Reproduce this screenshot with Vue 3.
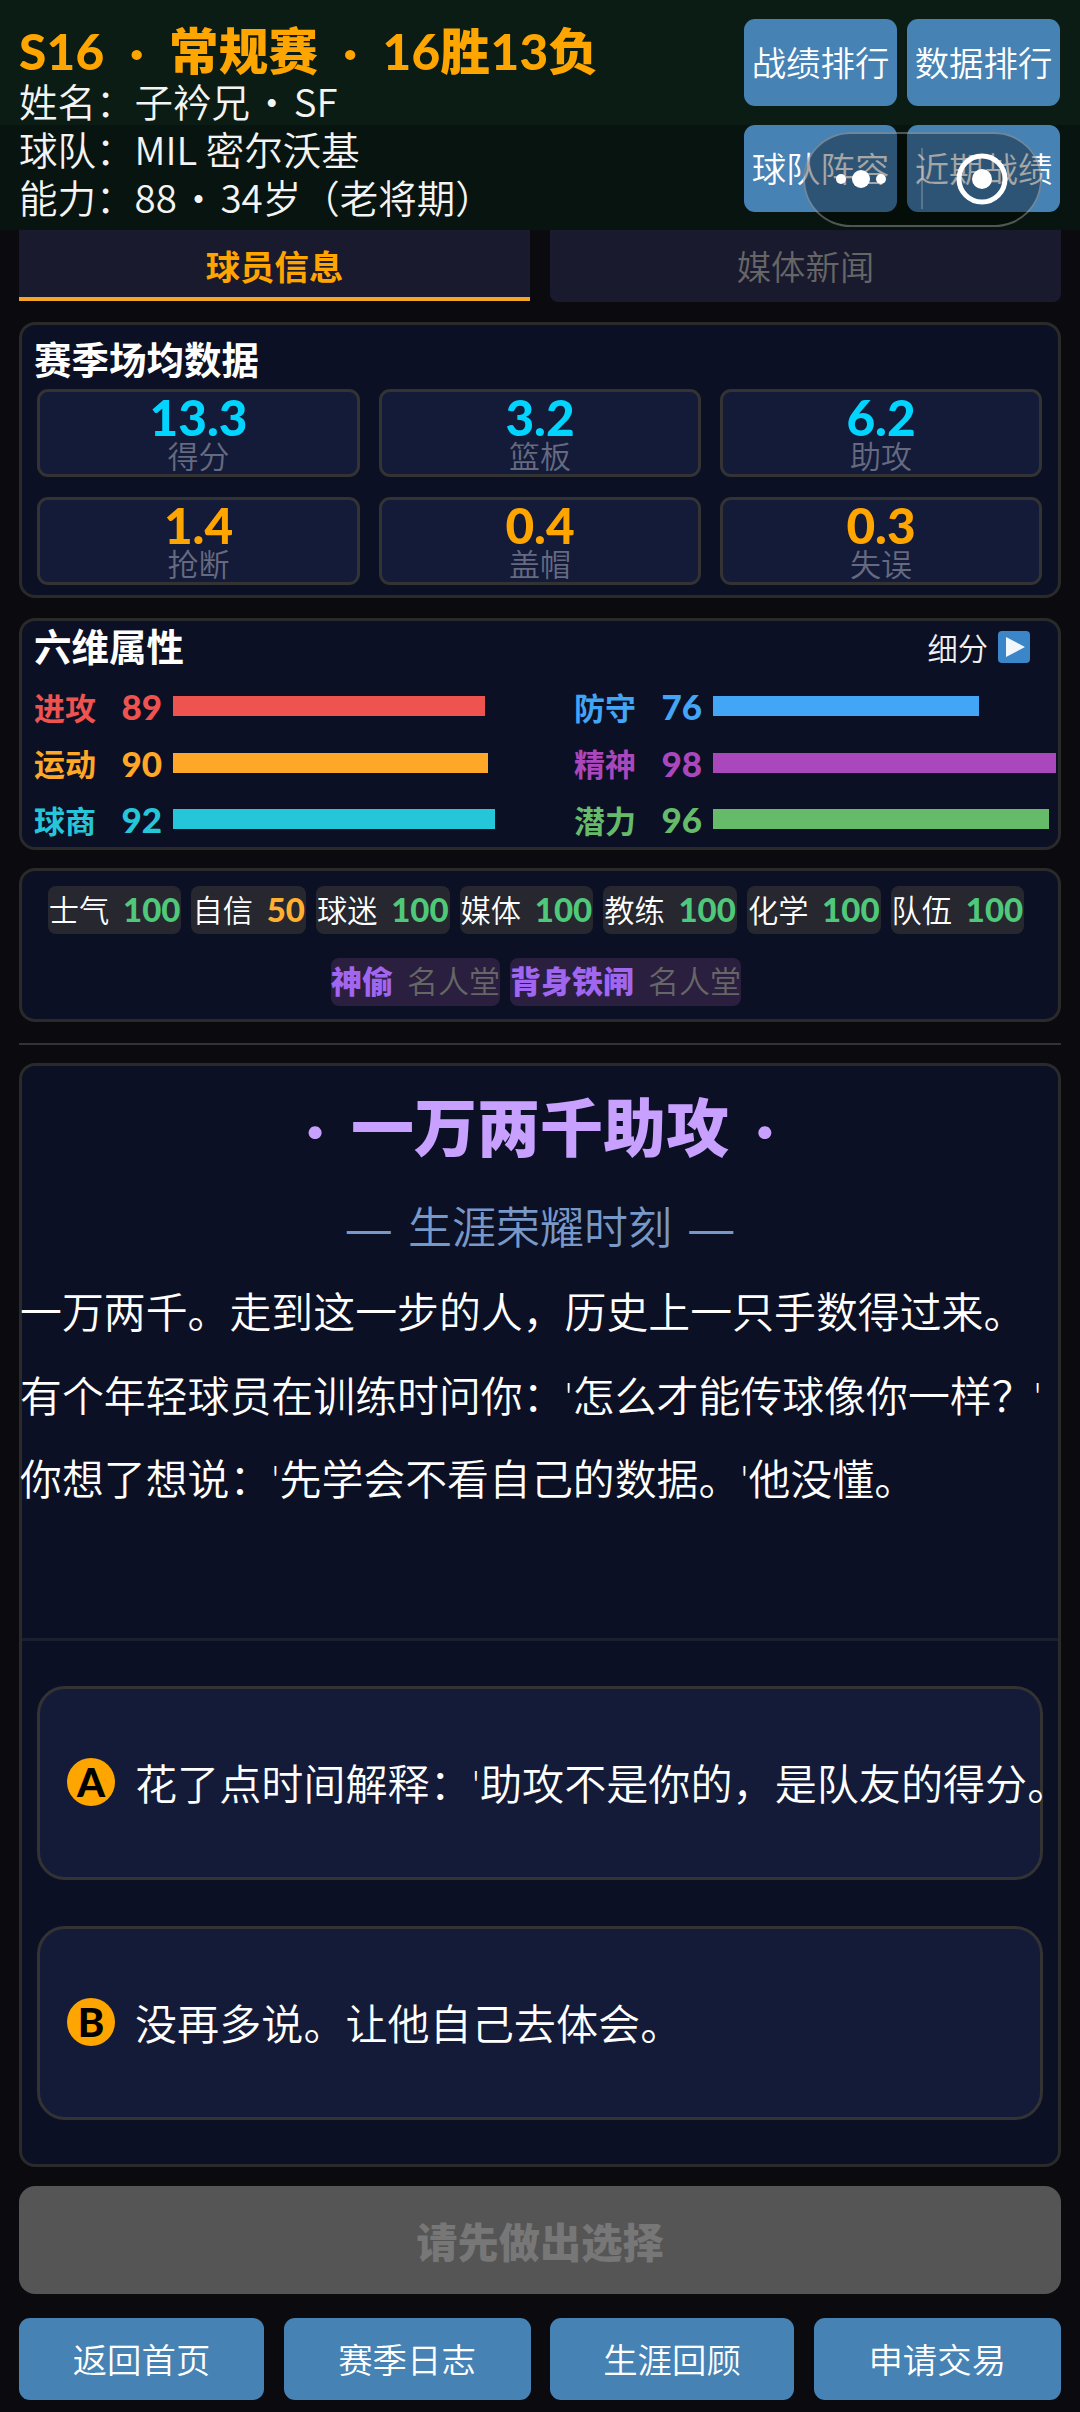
<template>
  <div class="page">
    <header class="top">
      <div class="info">
        <div class="season">S16 · 常规赛 · 16胜13负</div>
        <div class="line line-dot">姓名：子衿兄 · SF</div>
        <div class="line">球队：MIL 密尔沃基</div>
        <div class="line line-dot">能力：88 · 34岁（老将期）</div>
      </div>
      <div class="top-btns">
        <button class="btn" v-for="b in topButtons" :key="b">{{ b }}</button>
      </div>
      <div class="capsule">
        <svg width="239" height="95" viewBox="0 0 239 95">
          <circle cx="38" cy="47" r="5" fill="#fff" />
          <circle cx="58" cy="47" r="9" fill="#fff" />
          <circle cx="78" cy="47" r="5" fill="#fff" />
          <path d="M119 16V77" stroke="rgba(255,255,255,0.2)" stroke-width="2" />
          <circle cx="179" cy="47" r="23" fill="none" stroke="#fff" stroke-width="5" />
          <circle cx="179" cy="47" r="10" fill="#fff" />
        </svg>
      </div>
    </header>

    <main class="content">
      <div class="tabs">
        <div class="tab tab-on">球员信息</div>
        <div class="tab">媒体新闻</div>
      </div>

      <section class="card stats-card">
        <h2>赛季场均数据</h2>
        <div class="stats">
          <div class="stat" v-for="s in stats" :key="s.label">
            <div class="stat-num" :class="s.hot ? 'num-orange' : 'num-blue'">{{ s.value }}</div>
            <div class="stat-label">{{ s.label }}</div>
          </div>
        </div>
      </section>

      <section class="card attrs-card">
        <div class="attrs-head">
          <h2>六维属性</h2>
          <div class="detail">细分 <span class="play"><i></i></span></div>
        </div>
        <div class="attrs">
          <div class="attr" v-for="a in attrs" :key="a.name" :style="{ color: a.color }">
            <span class="attr-name">{{ a.name }}</span>
            <span class="attr-val">{{ a.value }}</span>
            <div class="track">
              <div class="fill" :style="{ width: a.value + '%', background: a.color }"></div>
            </div>
          </div>
        </div>
      </section>

      <section class="card chips-card">
        <div class="chips">
          <span class="chip" v-for="c in chips" :key="c.name">{{ c.name }} <b :class="{ low: c.value < 100 }">{{ c.value }}</b></span>
        </div>
        <div class="chips">
          <span class="chip chip-hall" v-for="h in halls" :key="h"><b>{{ h }}</b> <em>名人堂</em></span>
        </div>
      </section>

      <hr class="rule" />

      <section class="card story">
        <div class="story-text">
          <h1>· 一万两千助攻 ·</h1>
          <div class="subtitle">— 生涯荣耀时刻 —</div>
          <p>一万两千。走到这一步的人，历史上一只手数得过来。</p>
          <p>有个年轻球员在训练时问你：'怎么才能传球像你一样？'</p>
          <p>你想了想说：'先学会不看自己的数据。'他没懂。</p>
        </div>
        <div class="options">
          <div class="option" v-for="o in options" :key="o.key">
            <span class="badge">{{ o.key }}</span>
            <span class="option-text">{{ o.text }}</span>
          </div>
        </div>
      </section>

      <button class="next">请先做出选择</button>

      <nav class="bottom">
        <button class="btn" v-for="b in bottomButtons" :key="b">{{ b }}</button>
      </nav>
    </main>
  </div>
</template>

<script setup>
const topButtons = ['战绩排行', '数据排行', '球队阵容', '近期战绩']
const bottomButtons = ['返回首页', '赛季日志', '生涯回顾', '申请交易']

const stats = [
  { value: '13.3', label: '得分' },
  { value: '3.2', label: '篮板' },
  { value: '6.2', label: '助攻' },
  { value: '1.4', label: '抢断', hot: true },
  { value: '0.4', label: '盖帽', hot: true },
  { value: '0.3', label: '失误', hot: true }
]

const attrs = [
  { name: '进攻', value: 89, color: '#ef5350' },
  { name: '防守', value: 76, color: '#42a5f5' },
  { name: '运动', value: 90, color: '#ffa726' },
  { name: '精神', value: 98, color: '#ab47bc' },
  { name: '球商', value: 92, color: '#26c6da' },
  { name: '潜力', value: 96, color: '#66bb6a' }
]

const chips = [
  { name: '士气', value: 100 },
  { name: '自信', value: 50 },
  { name: '球迷', value: 100 },
  { name: '媒体', value: 100 },
  { name: '教练', value: 100 },
  { name: '化学', value: 100 },
  { name: '队伍', value: 100 }
]

const halls = ['神偷', '背身铁闸']

const options = [
  { key: 'A', text: "花了点时间解释：'助攻不是你的，是队友的得分。" },
  { key: 'B', text: '没再多说。让他自己去体会。' }
]
</script>

<style>
html,
body {
  margin: 0;
  background: #0a0a0f;
}
</style>

<style scoped>
.page {
  width: 1080px;
  height: 2412px;
  overflow: hidden;
  background: #0a0a0f;
  color: #fff;
  font-family: Lato, "Noto Sans CJK SC", sans-serif;
}

h1,
h2,
p {
  margin: 0;
}

button {
  border: none;
  font-family: inherit;
  padding: 0;
}

.top {
  position: relative;
  height: 230px;
  box-sizing: border-box;
  padding: 19px 20px 19px 19px;
  display: flex;
  justify-content: space-between;
  background: linear-gradient(#0a1c14 125px, #08140f 125px);
}

.info {
  padding-top: 8px;
}

.season {
  font-size: 49.5px;
  line-height: 48.5px;
  font-weight: 900;
  letter-spacing: 0.3px;
  word-spacing: 13px;
  color: #ffa500;
}

.line {
  font-family: "Noto Sans CJK SC", sans-serif;
  font-size: 38.5px;
  line-height: 48px;
  font-weight: 350;
  color: #f4f4f4;
}

.line-dot {
  word-spacing: -6px;
}

.top-btns {
  display: grid;
  grid-template-columns: 153px 153px;
  grid-auto-rows: 87px;
  gap: 19px 10px;
}

.btn {
  background: #4682b4;
  color: #fff;
  font-size: 34.4px;
  font-weight: 350;
  padding-bottom: 3px;
  border-radius: 11px;
}

.capsule {
  position: absolute;
  left: 803px;
  top: 132px;
  width: 239px;
  height: 95px;
  border-radius: 48px;
  box-shadow: inset 0 0 0 2px rgba(255, 255, 255, 0.3);
  background: rgba(0, 0, 0, 0.35);
}

.capsule svg {
  display: block;
}

.content {
  padding: 0 19px;
}

.tabs {
  display: grid;
  grid-template-columns: 511px 511px;
  gap: 20px;
}

.tab {
  height: 72px;
  box-sizing: border-box;
  background: #1a1a2e;
  border-radius: 0 0 8px 8px;
  color: #666;
  font-size: 34.4px;
  font-weight: 350;
  line-height: 73px;
  text-align: center;
}

.tab-on {
  color: #ffa500;
  font-weight: 700;
  border-radius: 0;
  border-bottom: 4px solid #f5a623;
  height: 71px;
}

.card {
  box-sizing: border-box;
  background: #0c1024;
  border: 3px solid #2a2a2a;
  border-radius: 16px;
}

.card h2 {
  font-size: 37.5px;
  line-height: 48px;
  font-weight: 700;
}

.stats-card {
  margin-top: 20px;
  height: 276px;
  padding: 11px 12px 0;
}

.stats {
  display: grid;
  grid-template-columns: 323px 322px 322px;
  grid-auto-rows: 88px;
  gap: 20px 19px;
  margin: 5px 0 0 3px;
}

.stat {
  box-sizing: border-box;
  background: #141b38;
  border: 3px solid #333;
  border-radius: 11px;
  text-align: center;
}

.stat-num {
  font-size: 49.5px;
  line-height: 46px;
  font-weight: 900;
  margin-top: 2px;
}

.num-blue {
  color: #00d4ff;
}

.num-orange {
  color: #ffa500;
}

.stat-label {
  font-size: 31px;
  line-height: 30px;
  margin-top: 1px;
  font-weight: 350;
  color: #666a80;
}

.attrs-card {
  margin-top: 20px;
  height: 232px;
  padding: 2px 0 0 12px;
}

.attrs-head {
  display: flex;
  justify-content: space-between;
  align-items: center;
  padding-right: 28px;
}

.detail {
  display: flex;
  align-items: center;
  gap: 10px;
  font-size: 30.25px;
  font-weight: 350;
  color: #f0f0f0;
}

.play {
  width: 32px;
  height: 32px;
  border-radius: 4px;
  background: #3a86c8;
  display: flex;
  align-items: center;
  justify-content: center;
}

.play i {
  display: block;
  margin-left: 3px;
  border-left: 19px solid #f2f7fc;
  border-top: 10px solid transparent;
  border-bottom: 10px solid transparent;
}

.attrs {
  display: grid;
  grid-template-columns: 540px 489px;
  grid-auto-rows: 56.5px;
  margin-top: 7px;
}

.attr {
  display: flex;
  align-items: center;
  font-weight: 700;
}

.attr-name {
  flex: none;
  width: 64px;
  font-size: 31px;
}

.attr-val {
  flex: none;
  width: 64px;
  text-align: right;
  font-size: 35px;
  font-weight: 900;
}

.track {
  width: 350px;
  height: 20px;
  margin-left: 11px;
  flex: none;
}

.fill {
  height: 100%;
}

.chips-card {
  margin-top: 18px;
  height: 154px;
  padding: 15px 8px 0 0;
}

.chips {
  display: flex;
  justify-content: center;
  gap: 10px;
}

.chips + .chips {
  margin-top: 24px;
}

.chip {
  height: 48px;
  line-height: 46px;
  padding: 0 1px;
  font-size: 30.25px;
  font-weight: 350;
  word-spacing: 5.5px;
  background: #27272f;
  border-radius: 8px;
  white-space: nowrap;
}

.chip b {
  font-size: 33px;
  font-weight: 900;
  color: #4fc87a;
}

.chip b.low {
  color: #ffb030;
}

.chip-hall {
  padding: 0;
  font-size: 31px;
  background: #2a1f3f;
}

.chip-hall b {
  font-size: 31px;
  color: #a066f0;
}

.chip-hall em {
  font-style: normal;
  color: #666;
}

.rule {
  margin: 21px 0 0;
  height: 2px;
  border: none;
  background: #333;
}

.story {
  margin-top: 18px;
  height: 1104px;
}

.story-text {
  height: 572px;
  border-bottom: 3px solid #1a2030;
}

.story h1 {
  padding-top: 25px;
  font-size: 63px;
  line-height: 72px;
  font-weight: 900;
  word-spacing: 12px;
  color: #c8a0ff;
  text-align: center;
}

.subtitle {
  margin-top: 36px;
  font-family: "Liberation Sans", "Noto Sans CJK SC", sans-serif;
  font-size: 44px;
  line-height: 60px;
  font-weight: 350;
  word-spacing: 5px;
  color: #7898c8;
  text-align: center;
}

.story p {
  margin-left: -2px;
  font-size: 41.9px;
  line-height: 83.5px;
  font-weight: 350;
  white-space: nowrap;
}

.subtitle + p {
  margin-top: 12px;
}

.options {
  display: flex;
  flex-direction: column;
  gap: 46px;
  padding: 45px 15px 0;
}

.option {
  height: 194px;
  box-sizing: border-box;
  background: #141b38;
  border: 3px solid #333;
  border-radius: 28px;
  display: flex;
  align-items: center;
  gap: 20px;
  padding: 0 0 3px 27px;
  white-space: nowrap;
}

.badge {
  flex: none;
  width: 48px;
  height: 48px;
  border-radius: 50%;
  background: #ffa500;
  color: #000;
  font-size: 40px;
  font-weight: 900;
  line-height: 48px;
  text-align: center;
}

.option-text {
  font-size: 42.1px;
  font-weight: 350;
}

.next {
  display: block;
  margin-top: 19px;
  width: 100%;
  height: 108px;
  background: #555;
  color: #777;
  font-size: 41.25px;
  font-weight: 900;
  border-radius: 16px;
}

.bottom {
  display: grid;
  grid-template-columns: 245px 247px 244px 1fr;
  gap: 19.5px;
  height: 82px;
  margin-top: 24px;
}
</style>
